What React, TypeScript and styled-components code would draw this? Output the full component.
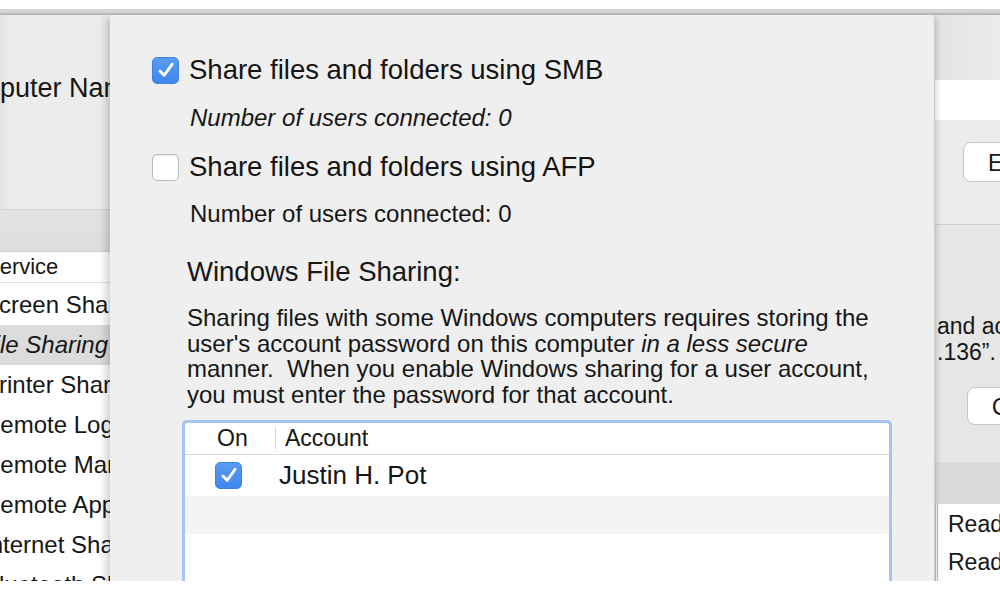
import React from 'react';
import styled, { createGlobalStyle } from 'styled-components';

/* global */
const GlobalStyle = createGlobalStyle`
  html, body {
    margin: 0;
    padding: 0;
    background: #ffffff;
  }
  body {
    font-family: "Liberation Sans", Arial, sans-serif;
    color: #161616;
  }
  #root {
    width: 1000px;
    height: 599px;
    overflow: hidden;
  }
`

/* page frame */
const Screen = styled.div`
  display: flex;
  flex-direction: column;
  width: 1000px;
  height: 599px;
  background: #ffffff;
`
const TopGap = styled.div`
  height: 9px;
  background: #ffffff;
`
const ToolbarEdge = styled.div`
  height: 4px;
  background: #d4d4d4;
  border-bottom: 2px solid #b7b7b7;
`
const WindowBody = styled.div`
  display: grid;
  grid-template-columns: 110px 825px 1fr;
  height: 566px;
  overflow: hidden;
`
const BottomGap = styled.div`
  flex: 1;
  background: #ffffff;
`

/* background window, left side */
const LeftPane = styled.div`
  display: flex;
  flex-direction: column;
  background: #ececec;
  overflow: hidden;
  white-space: nowrap;
  font-size: 24px;
`
const NameSection = styled.div`
  height: 195px;
  box-sizing: border-box;
  padding-top: 57px;
  border-bottom: 1px solid #d3d3d3;
  background: linear-gradient(90deg, #e2e2e2 0, #ececec 9px);
`
const NameLabel = styled.div`
  margin-left: -57px;
  font-size: 27px;
  line-height: 32px;
`
const ListTopBand = styled.div`
  height: 41px;
  background: linear-gradient(#e3e3e3, #dddddd);
  border-bottom: 1px solid #d0d0d0;
`
const ServiceList = styled.div`
  flex: 1;
  background: #ffffff;
`
const ServiceHeader = styled.div`
  height: 30px;
  line-height: 30px;
  text-indent: -15px;
  font-size: 22px;
  border-bottom: 1px solid #e0e0e0;
  margin-bottom: 2px;
`
const ServiceRow = styled.div<{ $selected?: boolean }>`
  height: 40px;
  line-height: 40px;
  text-indent: ${p => (p.$selected ? -20 : -17)}px;
  background: ${p => (p.$selected ? '#dcdcdc' : 'transparent')};
  font-style: ${p => (p.$selected ? 'italic' : 'normal')};
`

/* background window, right side */
const RightPane = styled.div`
  display: flex;
  flex-direction: column;
  background: #e8e8e8;
  overflow: hidden;
  white-space: nowrap;
  font-size: 23px;
`
const RightTop = styled.div`
  height: 65px;
  background: linear-gradient(90deg, #e2e2e2, #ececec);
`
const NameField = styled.div`
  height: 40px;
  background: #ffffff;
`
const EditSection = styled.div`
  height: 105px;
  box-sizing: border-box;
  padding: 22px 0 0 28px;
  background: #ebebeb;
  border-bottom: 1px solid #cfcfcf;
`
const PushButton = styled.div<{ $height: number }>`
  height: ${p => p.$height}px;
  line-height: ${p => p.$height}px;
  width: 80px;
  box-sizing: border-box;
  padding-left: 24px;
  background: #ffffff;
  border: 1px solid #c6c6c6;
  border-radius: 8px;
`
const InfoSection = styled.div`
  height: 237px;
  box-sizing: border-box;
  padding: 88px 0 0 2px;
  background: #e6e6e6;
`
const InfoLine = styled.div`
  line-height: 26px;
`
const InfoButtonWrap = styled.div`
  margin: 22px 0 0 30px;
`
const PermHeaderBand = styled.div`
  height: 42px;
  background: #dadada;
`
const PermList = styled.div`
  flex: 1;
  background: #ffffff;
  border-left: 3px double #c4c4c4;
  padding: 1px 0 0 10px;
`
const PermRow = styled.div`
  line-height: 38px;
`

/* sheet */
const Sheet = styled.div`
  position: relative;
  z-index: 1;
  background: #efefef;
  box-sizing: border-box;
  padding: 40px 0 0 42px;
  border-right: 1px solid #cfcfcf;
  box-shadow: -5px 0 9px -2px rgba(0, 0, 0, 0.22), 4px 0 6px -3px rgba(0, 0, 0, 0.18);
  white-space: nowrap;
`
const OptionRow = styled.div<{ $top: number }>`
  display: flex;
  align-items: center;
  gap: 10px;
  height: 30px;
  margin-top: ${p => p.$top}px;
`
const OptionLabel = styled.span`
  font-size: 27.5px;
  line-height: 30px;
  color: #141414;
`
const CheckBox = styled.span<{ $checked?: boolean; $size: number }>`
  display: inline-flex;
  align-items: center;
  justify-content: center;
  flex: none;
  width: ${p => p.$size}px;
  height: ${p => p.$size}px;
  box-sizing: border-box;
  border-radius: 5px;
  background: ${p => (p.$checked ? 'linear-gradient(#5a9cf3, #3f86ee)' : '#ffffff')};
  border: 1px solid ${p => (p.$checked ? '#3c82e6' : '#b9b9b9')};
  box-shadow: ${p => (p.$checked ? 'none' : 'inset 0 1px 1px rgba(0,0,0,0.08)')};
`
const Note = styled.div<{ $top: number; $italic?: boolean }>`
  margin: ${p => p.$top}px 0 0 38px;
  font-size: 24px;
  line-height: 28px;
  font-style: ${p => (p.$italic ? 'italic' : 'normal')};
`
const Heading = styled.div`
  margin: 28px 0 0 35px;
  font-size: 27.5px;
  line-height: 32px;
`
const Paragraph = styled.div`
  margin: 17px 0 0 35px;
  font-size: 24px;
  line-height: 25.7px;
`
const ParaLine = styled.div`
  white-space: pre;
`
const Slanted = styled.span`
  font-style: italic;
`

/* account table */
const AccountTable = styled.div`
  margin: 12px 0 0 30px;
  width: 710px;
  height: 200px;
  box-sizing: border-box;
  background: #ffffff;
  border: 3px solid #a2c5f4;
  border-bottom: none;
  border-radius: 5px 5px 0 0;
`
const TableHeader = styled.div`
  display: grid;
  grid-template-columns: 90px 1fr;
  align-items: center;
  height: 31px;
  border-bottom: 1px solid #dadada;
  font-size: 23px;
`
const HeaderCell = styled.div<{ $divider?: boolean }>`
  padding-left: ${p => (p.$divider ? 9 : 32)}px;
  line-height: 22px;
  border-left: ${p => (p.$divider ? '1px solid #d6d6d6' : 'none')};
`
const TableRow = styled.div<{ $striped?: boolean; $height: number }>`
  display: grid;
  grid-template-columns: 90px 1fr;
  align-items: center;
  height: ${p => p.$height}px;
  background: ${p => (p.$striped ? '#f4f4f4' : '#ffffff')};
  font-size: 26px;
`
const OnCell = styled.div`
  display: flex;
  padding-left: 30px;
`
const NameCell = styled.div`
  padding-left: 4px;
`

const Tick = ({ size }: { size: number }) => (
  <svg width={size * 0.74} height={size * 0.74} viewBox="0 0 16 16">
    <path d="M3.2 8.8 L6.5 12.3 L12.9 3.4" fill="none" stroke="#ffffff" strokeWidth="2.3" strokeLinecap="round" strokeLinejoin="round" />
  </svg>
)

const Check = ({ checked, size = 27 }: { checked?: boolean; size?: number }) => (
  <CheckBox $checked={checked} $size={size}>
    {checked && <Tick size={size} />}
  </CheckBox>
)

const services = [
  'Screen Sharing',
  'File Sharing',
  'Printer Sharing',
  'Remote Login',
  'Remote Management',
  'Remote Apple Events',
  'Internet Sharing',
  'Bluetooth Sharing',
]

const App = () => {
  return (
    <>
      <GlobalStyle />
      <Screen>
        <TopGap />
        <ToolbarEdge />
        <WindowBody>
          <LeftPane>
            <NameSection>
              <NameLabel>Computer Name:</NameLabel>
            </NameSection>
            <ListTopBand />
            <ServiceList>
              <ServiceHeader>Service</ServiceHeader>
              {services.map((name, index) => (
                <ServiceRow key={index} $selected={name === 'File Sharing'}>{name}</ServiceRow>
              ))}
            </ServiceList>
          </LeftPane>

          <Sheet>
            <OptionRow $top={0}>
              <Check checked />
              <OptionLabel>Share files and folders using SMB</OptionLabel>
            </OptionRow>
            <Note $top={19} $italic>Number of users connected: 0</Note>
            <OptionRow $top={20}>
              <Check />
              <OptionLabel>Share files and folders using AFP</OptionLabel>
            </OptionRow>
            <Note $top={18}>Number of users connected: 0</Note>
            <Heading>Windows File Sharing:</Heading>
            <Paragraph>
              <ParaLine>Sharing files with some Windows computers requires storing the</ParaLine>
              <ParaLine>user's account password on this computer <Slanted>in a less secure</Slanted></ParaLine>
              <ParaLine>manner.  When you enable Windows sharing for a user account,</ParaLine>
              <ParaLine>you must enter the password for that account.</ParaLine>
            </Paragraph>
            <AccountTable>
              <TableHeader>
                <HeaderCell>On</HeaderCell>
                <HeaderCell $divider>Account</HeaderCell>
              </TableHeader>
              <TableRow $height={41}>
                <OnCell><Check checked size={27} /></OnCell>
                <NameCell>Justin H. Pot</NameCell>
              </TableRow>
              <TableRow $height={38} $striped />
              <TableRow $height={42} />
            </AccountTable>
          </Sheet>

          <RightPane>
            <RightTop />
            <NameField />
            <EditSection>
              <PushButton $height={40}>Edit...</PushButton>
            </EditSection>
            <InfoSection>
              <InfoLine>and access all volumes, at</InfoLine>
              <InfoLine>.136”.</InfoLine>
              <InfoButtonWrap>
                <PushButton $height={38}>Options...</PushButton>
              </InfoButtonWrap>
            </InfoSection>
            <PermHeaderBand />
            <PermList>
              <PermRow>Read &amp; Write</PermRow>
              <PermRow>Read &amp; Write</PermRow>
              <PermRow>Read Only</PermRow>
            </PermList>
          </RightPane>
        </WindowBody>
        <BottomGap />
      </Screen>
    </>
  );
};

export default App;
